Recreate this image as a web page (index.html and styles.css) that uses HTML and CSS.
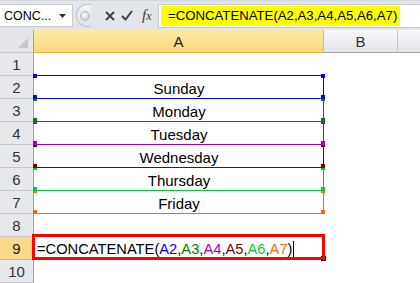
FILE: index.html
```html
<!DOCTYPE html>
<html lang="en">
<head>
    <meta charset="UTF-8">
    <title>CONCATENATE</title>
    <link rel="stylesheet" href="styles.css">
</head>
<body>
    <!-- Formula bar -->
    <div class="formula-bar">
        <div class="name-box">
            <span>CONC...</span>
            <svg class="caret" width="7" height="4" viewBox="0 0 7 4"><path d="M0 0H7L3.5 4Z" fill="#333"/></svg>
        </div>
        <div class="splitter"><span class="knob"></span></div>
        <div class="fx-buttons">
            <svg width="10" height="10" viewBox="0 0 10 10"><path d="M1 1L9 9M9 1L1 9" stroke="#404040" stroke-width="1.8"/></svg>
            <svg width="12" height="11" viewBox="0 0 12 11"><path d="M1 6L4.5 9.5L11 1" stroke="#404040" stroke-width="2" fill="none"/></svg>
            <span class="fx">f<i>x</i></span>
        </div>
        <div class="formula-input">
            <span class="highlight">=CONCATENATE(A2,A3,A4,A5,A6,A7)</span>
        </div>
    </div>

    <!-- Sheet -->
    <div class="sheet">
        <div class="corner"><span class="tri"></span></div>
        <div class="col-head active">A</div>
        <div class="col-head">B</div>
        <div class="col-head rest"></div>

        <div class="row-head">1</div><div class="cell"></div><div class="cell"></div><div class="cell"></div>
        <div class="row-head">2</div><div class="cell">Sunday</div><div class="cell"></div><div class="cell"></div>
        <div class="row-head">3</div><div class="cell">Monday</div><div class="cell"></div><div class="cell"></div>
        <div class="row-head">4</div><div class="cell">Tuesday</div><div class="cell"></div><div class="cell"></div>
        <div class="row-head">5</div><div class="cell">Wednesday</div><div class="cell"></div><div class="cell"></div>
        <div class="row-head">6</div><div class="cell">Thursday</div><div class="cell"></div><div class="cell"></div>
        <div class="row-head">7</div><div class="cell">Friday</div><div class="cell"></div><div class="cell"></div>
        <div class="row-head">8</div><div class="cell"></div><div class="cell"></div><div class="cell"></div>
        <div class="row-head active">9</div>
        <div class="cell editing">=CONCATENATE(<span class="c2">A2</span>,<span class="c3">A3</span>,<span class="c4">A4</span>,<span class="c5">A5</span>,<span class="c6">A6</span>,<span class="c7">A7</span>)<span class="caret-line"></span></div>
        <div class="cell"></div><div class="cell"></div>
        <div class="row-head">10</div><div class="cell"></div><div class="cell"></div><div class="cell"></div>

        <!-- reference highlights, drawn last-first so earlier ranges sit on top -->
        <div class="ref r7"><i class="tl"></i><i class="tr"></i><i class="bl"></i><i class="br"></i></div>
        <div class="ref r6"><i class="tl"></i><i class="tr"></i><i class="bl"></i><i class="br"></i></div>
        <div class="ref r5"><i class="tl"></i><i class="tr"></i><i class="bl"></i><i class="br"></i></div>
        <div class="ref r4"><i class="tl"></i><i class="tr"></i><i class="bl"></i><i class="br"></i></div>
        <div class="ref r3"><i class="tl"></i><i class="tr"></i><i class="bl"></i><i class="br"></i></div>
        <div class="ref r2"><i class="tl"></i><i class="tr"></i><i class="bl"></i><i class="br"></i></div>

        <div class="fill-handle"></div>
        <div class="active-cell"></div>
    </div>
</body>
</html>
```

FILE: styles.css
```css
/* Excel-like sheet */
body {
    margin: 0;
    width: 420px;
    height: 283px;
    overflow: hidden;
    background: #fff;
    font-family: "Liberation Sans", Arial, sans-serif;
}

.formula-bar {
    display: flex;
    align-items: flex-start;
    height: 30px;
    padding-top: 3px;
    box-sizing: border-box;
    background: #e2e5ea;
    border-top: 1px solid #d4d8de;
}

.name-box {
    width: 73px;
    height: 23px;
    box-sizing: border-box;
    display: flex;
    align-items: center;
    justify-content: space-between;
    padding: 0 6px 0 4px;
    background: #fff;
    border: 1px solid #c6cbd3;
    border-left: none;
    font-size: 12.5px;
    color: #000;
}

.caret {
    margin-top: 1px;
}

.splitter {
    width: 15px;
    height: 23px;
    margin-left: 3px;
    box-sizing: border-box;
    border: 1px solid #c0c5cc;
    border-right: none;
    border-radius: 11px 0 0 11px;
    background: linear-gradient(#f4f5f7, #dfe2e6);
    display: flex;
    align-items: center;
    padding-left: 3px;
}

.knob {
    width: 8px;
    height: 8px;
    border-radius: 50%;
    background: radial-gradient(circle at 40% 35%, #fff, #b8bcc2);
    border: 1px solid #b4b8be;
}

.fx-buttons {
    width: 67px;
    height: 23px;
    display: flex;
    align-items: center;
    padding-left: 14px;
    gap: 6px;
    box-sizing: border-box;
}

.fx {
    font-family: "Liberation Serif", "Times New Roman", serif;
    font-style: italic;
    font-size: 15px;
    color: #404040;
    margin-left: 3px;
}

.fx i {
    font-size: 12px;
}

.formula-input {
    flex: 1;
    height: 24px;
    box-sizing: border-box;
    padding: 1px 0 0 2px;
    background: #fff;
    border: 1px solid #c6cbd3;
    border-right: none;
}

.highlight {
    display: inline-block;
    height: 20px;
    line-height: 20px;
    padding: 0 3px 0 7px;
    background: #ffff00;
    font-size: 13.2px;
    color: #000;
}

.sheet {
    position: relative;
    display: grid;
    grid-template-columns: 34px 290px 74px 1fr;
    grid-auto-rows: 23px;
}

.corner, .col-head, .row-head {
    box-sizing: border-box;
    border-right: 1px solid #c3c7cd;
    border-bottom: 1px solid #c3c7cd;
    color: #333;
    font-size: 15px;
    display: flex;
    align-items: center;
    justify-content: center;
}

.corner {
    position: relative;
    background: #e4e6ea;
    border-right-color: #9ea3aa;
}

.tri {
    position: absolute;
    right: 5px;
    bottom: 4px;
    width: 0;
    height: 0;
    border-left: 10px solid transparent;
    border-bottom: 10px solid #c3c6cb;
}

.col-head {
    background: linear-gradient(#f8f9fa, #e3e6ea);
    border-bottom-color: #9ea3aa;
}

.col-head.active {
    background: linear-gradient(#fdeaa9, #f9d777);
    border-bottom: 1px solid #f0b043;
    border-right-color: #e9b55e;
    color: #222;
}

.col-head.rest {
    border-right: none;
}

.row-head {
    background: #e6e8ec;
    border-right-color: #9ea3aa;
    padding-top: 1px;
}

.row-head.active {
    background: #fbd98a;
    border-right: 1px solid #f0b043;
    border-bottom-color: #e9b55e;
    color: #222;
}

.cell {
    font-size: 15px;
    color: #000;
    display: flex;
    align-items: center;
    justify-content: center;
    padding-top: 1px;
    white-space: nowrap;
}

.cell.editing {
    justify-content: flex-start;
    padding-left: 3px;
    font-size: 14.7px;
    overflow: visible;
}

.c2 { color: #0000ff; }
.c3 { color: #008000; }
.c4 { color: #9900cc; }
.c5 { color: #800000; }
.c6 { color: #00cc33; }
.c7 { color: #ff6600; }

.caret-line {
    width: 1px;
    height: 17px;
    margin-left: 1px;
    background: #000;
}

/* coloured reference boxes */
.ref {
    position: absolute;
    left: 33px;
    width: 291px;
    height: 24px;
    box-sizing: border-box;
    border: 1px solid;
    border-left-color: transparent;
}

.ref i {
    position: absolute;
    width: 4px;
    height: 4px;
    background: currentColor;
}

.ref .tl { left: -1px; top: -2px; }
.ref .tr { right: -2px; top: -2px; }
.ref .bl { left: -1px; bottom: -1px; }
.ref .br { right: -2px; bottom: -1px; }

.r2 { top: 45px; color: #0000ff; }
.r3 { top: 68px; color: #008000; }
.r4 { top: 91px; color: #9900cc; }
.r5 { top: 114px; color: #800000; }
.r6 { top: 137px; color: #00cc33; }
.r7 { top: 160px; color: #ff6600; }

.active-cell {
    position: absolute;
    left: 32px;
    top: 204px;
    width: 293px;
    height: 26px;
    box-sizing: border-box;
    border: 3px solid #ff0000;
}

.fill-handle {
    position: absolute;
    left: 321px;
    top: 226px;
    width: 5px;
    height: 5px;
    background: #000;
}
```
